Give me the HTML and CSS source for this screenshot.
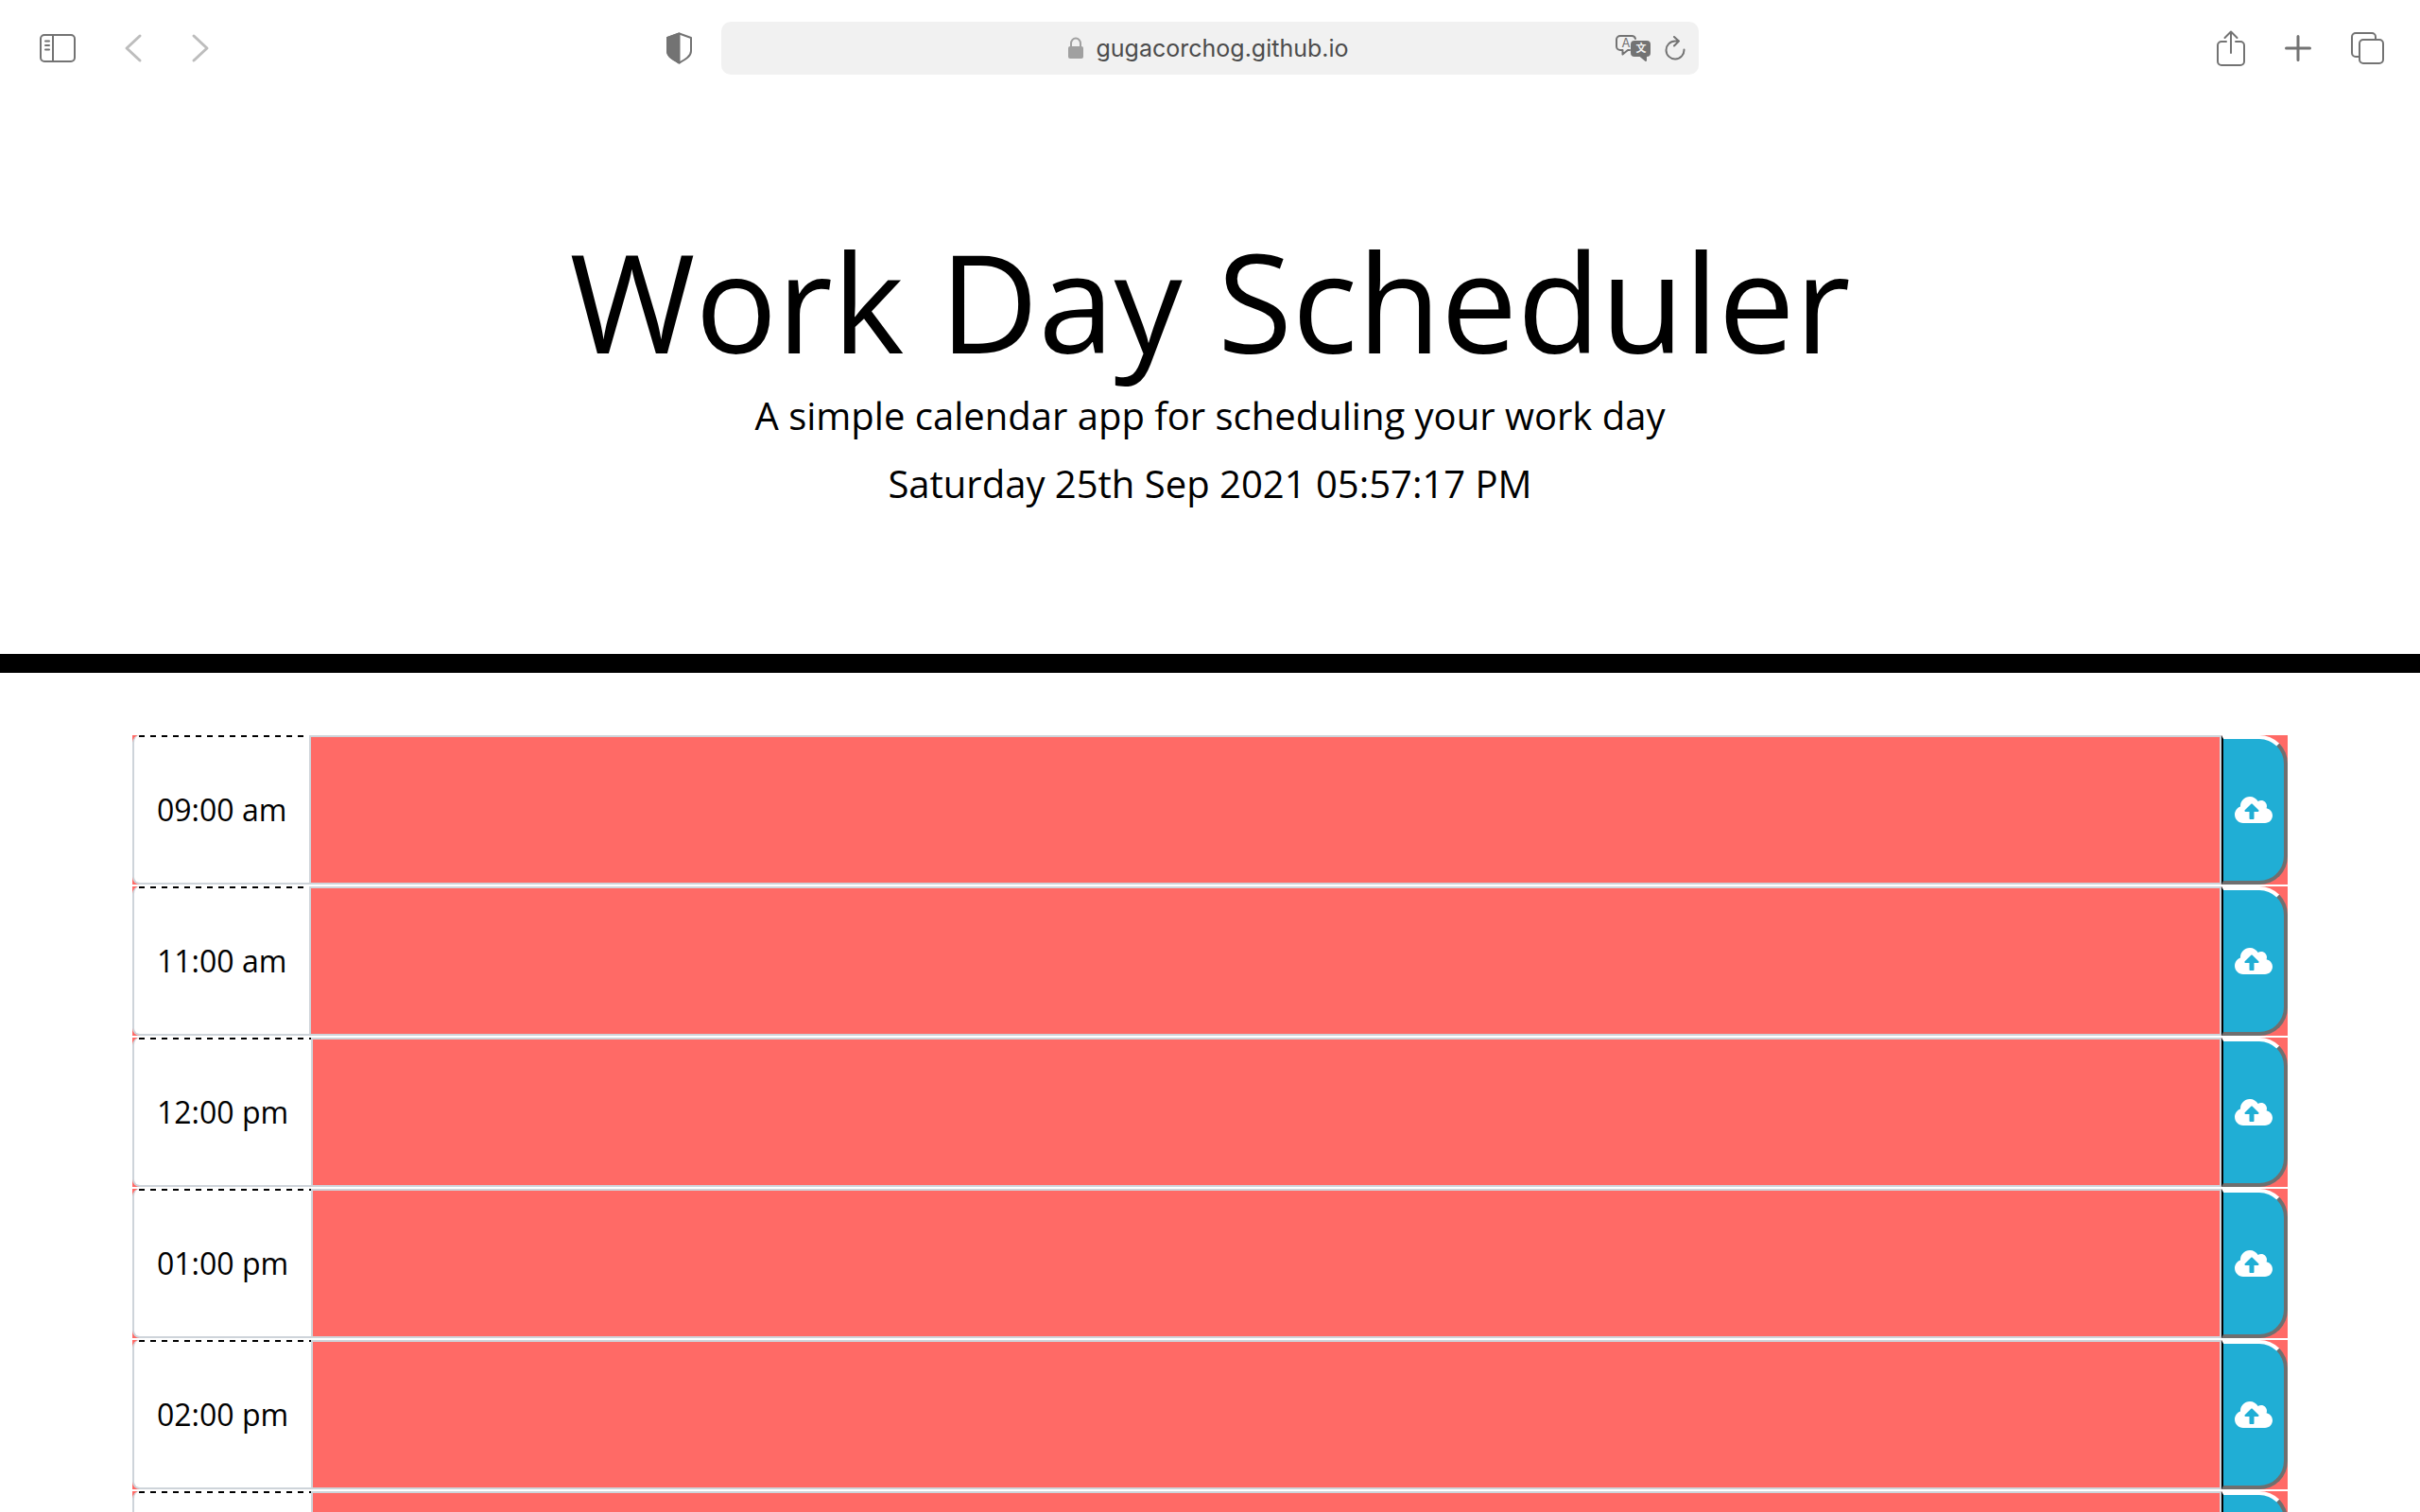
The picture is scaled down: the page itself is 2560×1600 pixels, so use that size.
FILE: index.html
```html
<!DOCTYPE html>
<html lang="en">
<head>
<meta charset="utf-8">
<title>Work Day Scheduler</title>
<link rel="stylesheet" href="styles.css">
</head>
<body>
<svg class="defs" aria-hidden="true">
  <symbol id="cloud" viewBox="0 0 640 512">
    <path fill="currentColor" d="M537.600 226.600c4.100-10.700 6.400-22.400 6.400-34.600 0-53-43-96-96-96-19.700 0-38.100 6-53.300 16.200C367 64.200 315.300 32 256 32c-88.400 0-160 71.600-160 160 0 2.700.1 5.400.2 8.100C40.200 219.800 0 273.200 0 336c0 79.500 64.500 144 144 144h368c70.700 0 128-57.300 128-128 0-61.900-44-113.600-102.400-125.400zM393.400 288H328v112c0 8.800-7.200 16-16 16h-48c-8.800 0-16-7.200-16-16V288h-65.400c-14.300 0-21.400-17.200-11.300-27.300l105.400-105.400c6.200-6.200 16.400-6.200 22.600 0l105.400 105.400c10.100 10.100 2.900 27.300-11.300 27.300z"/>
  </symbol>
</svg>
<nav class="toolbar" aria-label="Browser">
  <div class="tools">
    <button class="tool" aria-label="Sidebar"><svg width="38" height="30" viewBox="0 0 38 30"><rect x="1" y="1" width="36" height="28" rx="4"/><path d="M14 1v28M6 7.500h4M6 12h4M6 16.500h4"/></svg></button>
    <button class="tool dim back" aria-label="Back"><svg width="16" height="28" viewBox="0 0 16 28"><path d="M15 1 1 14 15 27"/></svg></button>
    <button class="tool dim forward" aria-label="Forward"><svg width="16" height="28" viewBox="0 0 16 28"><path d="M1 1l14 13L1 27"/></svg></button>
    <button class="tool shield" aria-label="Privacy report"><svg width="27" height="34" viewBox="0 0 27 34"><path d="M13.500 1.500 26 6v14c0 6-7 9.500-12.500 12.500C8 29.500 1 26 1 20V6z"/><path class="solid" d="M13.500 1.500V32.500C8 29.500 1 26 1 20V6z"/></svg></button>
  </div>
  <div class="address">
    <div class="site">
      <svg width="16" height="24" viewBox="0 0 16 24"><path class="shackle" d="M3 11V7a5 5.500 0 0 1 10 0V11"/><rect class="lock" y="10" width="16" height="13" rx="2"/></svg>
      <input class="url" type="text" aria-label="Address" value="gugacorchog.github.io">
    </div>
    <button class="tool" aria-label="Translate"><svg width="38" height="28" viewBox="0 0 38 28"><path class="thin" d="M15 16h-2l-5.500 4.500V16H5a4 4 0 0 1-4-4V5a4 4 0 0 1 4-4h12a4 4 0 0 1 4 3"/><path class="bubble" d="M20 7h13a3 3 0 0 1 3 3v9a3 3 0 0 1-3 3h-1v5l-6-5h-6a3 3 0 0 1-3-3v-9a3 3 0 0 1 3-3z"/><text class="latin" x="11" y="13">A</text><text class="han" x="27" y="18">文</text></svg></button>
    <button class="tool reload" aria-label="Reload"><svg width="22" height="26" viewBox="0 0 22 26"><path class="thin" d="M20.500 14.500A9.500 9.500 0 1 1 11 5.500h4M10 1l5 4.500-5 5"/></svg></button>
  </div>
  <div class="tools end">
    <button class="tool" aria-label="Share"><svg width="30" height="38" viewBox="0 0 30 38"><path d="M10 12H5a4 4 0 0 0-4 4v17a4 4 0 0 0 4 4h20a4 4 0 0 0 4-4V16a4 4 0 0 0-4-4h-5M15 24V2M8.500 8 15 1.500 21.500 8"/></svg></button>
    <button class="tool" aria-label="New tab"><svg width="28" height="28" viewBox="0 0 28 28"><path class="thick" d="M14 1.500v25M1.500 14h25"/></svg></button>
    <button class="tool" aria-label="Tabs"><svg width="35" height="34" viewBox="0 0 35 34"><path d="M8 26H5a4 4 0 0 1-4-4V5a4 4 0 0 1 4-4h17a4 4 0 0 1 4 4v3"/><rect x="9" y="8" width="25" height="25" rx="4"/></svg></button>
  </div>
</nav>
<header class="banner">
  <h1 class="title">Work Day Scheduler</h1>
  <p class="lead">A simple calendar app for scheduling your work day</p>
  <p class="lead">Saturday 25th Sep 2021 05:57:17 PM</p>
</header>
<main class="schedule">
  <div class="block"><label class="hour" for="h9">09:00 am</label><textarea class="task" id="h9"></textarea><button class="save" aria-label="Save"><svg class="cloud"><use href="#cloud"/></svg></button></div>
  <div class="block"><label class="hour" for="h11">11:00 am</label><textarea class="task" id="h11"></textarea><button class="save" aria-label="Save"><svg class="cloud"><use href="#cloud"/></svg></button></div>
  <div class="block"><label class="hour" for="h12">12:00 pm</label><textarea class="task" id="h12"></textarea><button class="save" aria-label="Save"><svg class="cloud"><use href="#cloud"/></svg></button></div>
  <div class="block"><label class="hour" for="h13">01:00 pm</label><textarea class="task" id="h13"></textarea><button class="save" aria-label="Save"><svg class="cloud"><use href="#cloud"/></svg></button></div>
  <div class="block"><label class="hour" for="h14">02:00 pm</label><textarea class="task" id="h14"></textarea><button class="save" aria-label="Save"><svg class="cloud"><use href="#cloud"/></svg></button></div>
  <div class="block"><label class="hour" for="h15">03:00 pm</label><textarea class="task" id="h15"></textarea><button class="save" aria-label="Save"><svg class="cloud"><use href="#cloud"/></svg></button></div>
</main>
</body>
</html>
```
FILE: styles.css
```css
* { box-sizing: border-box; }

body {
  display: flex;
  flex-direction: column;
  height: 100vh;
  margin: 0;
  overflow: hidden;
  background: #fff;
  color: #000;
  font-family: "Open Sans", "Noto Sans", sans-serif;
}

.defs { display: none; }

/* Browser toolbar */
.toolbar {
  display: flex;
  flex: none;
  align-items: center;
  height: 102px;
  padding: 0 38px;
}

.tools {
  display: flex;
  flex: 1 1 0;
  align-items: center;
  padding-left: 4px;
}

.end {
  justify-content: flex-end;
  gap: 42px;
}

.tool {
  display: flex;
  padding: 0;
  border: 0;
  background: none;
  color: #737373;
}

.tool svg {
  fill: none;
  stroke: currentColor;
  stroke-width: 2;
  stroke-linecap: round;
  stroke-linejoin: round;
  overflow: visible;
}

.dim { color: #bdbdbd; }
.dim svg { stroke-width: 3; }
.back { margin-left: 53px; }
.forward { margin-left: 55px; }
.shield { margin: 0 31px 0 auto; }
.tool .solid { fill: currentColor; }
.tool .thick { stroke-width: 3; }
.reload { margin-left: 14px; }

.bubble { fill: currentColor; }

.latin, .han {
  stroke: none;
  text-anchor: middle;
}

.latin {
  fill: #737373;
  font: 13px Inter, sans-serif;
}

.han {
  fill: #f1f1f1;
  font: bold 11px "Noto Sans CJK SC", sans-serif;
}

.address {
  display: flex;
  flex: 0 1 1034px;
  align-items: center;
  height: 56px;
  padding: 0 14px 0 92px;
  border-radius: 10px;
  background: #f1f1f1;
}

.site {
  display: flex;
  align-items: center;
  gap: 14px;
  margin: 0 auto;
}

.shackle {
  fill: none;
  stroke: #a0a0a0;
  stroke-width: 2;
}

.lock { fill: #a0a0a0; }

.url {
  width: 275px;
  padding: 0;
  border: 0;
  background: none;
  color: #4c4c4c;
  font: 25px Inter, sans-serif;
}

/* Page heading */
.banner {
  flex: none;
  padding: 130px 32px 138px;
  border-bottom: 20px solid #000;
  text-align: center;
}

.title {
  margin: 0 0 6px;
  font-size: 144px;
  font-weight: 400;
  line-height: 172px;
}

.lead {
  margin: 0 0 12px;
  font-size: 40px;
  line-height: 60px;
}

/* Time blocks */
.schedule {
  display: flex;
  flex: 1 1 0;
  flex-direction: column;
  gap: 2px;
  min-height: 0;
  padding: 66px 140px 0;
  overflow: hidden;
}

.block {
  display: flex;
  flex: none;
  height: 158px;
  background: #ff6a66;
}

/* The top edge is a row of 6px dashes, 12px apart */
.hour {
  display: flex;
  align-items: center;
  padding: 2px 24px 0;
  border: 2px solid #ced4da;
  border-top: 0;
  border-radius: 8px 0 0 8px;
  background: linear-gradient(90deg, #000 6px, #fff 6px) 5px 0 / 12px 2px repeat-x #fff;
  font-size: 32px;
  line-height: 48px;
  white-space: nowrap;
}

.task {
  flex: 1 1 0;
  margin: 0 0 0 -2px;
  padding: 12px 24px;
  border: 2px solid #ced4da;
  border-radius: 0;
  background: #ff6a66;
  font: 32px "Open Sans", sans-serif;
  outline: 0;
  resize: none;
}

.save {
  display: flex;
  align-items: center;
  justify-content: center;
  width: 70px;
  padding: 0;
  border-style: solid;
  border-width: 4px 4px 4px 2px;
  border-color: #fff #6f6f6f #6f6f6f #000;
  border-radius: 0 30px 30px 0;
  background: #20aed5;
  color: #fff;
}

.cloud {
  width: 40px;
  height: 32px;
}
```
